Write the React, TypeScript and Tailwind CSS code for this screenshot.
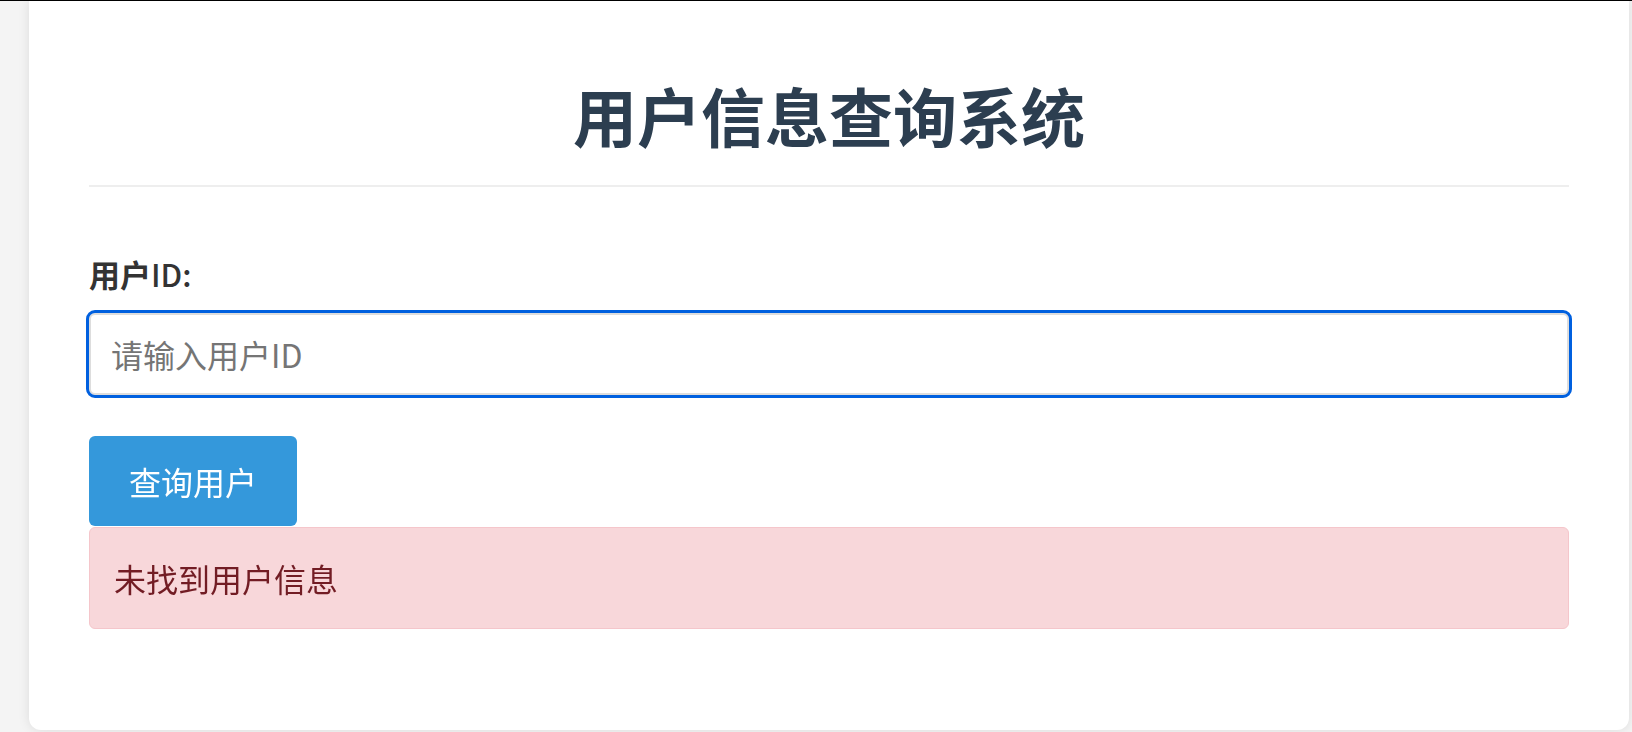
import React, { useEffect, useRef, useState } from "react";

export default function App() {
  const [userId, setUserId] = useState("");
  const inputRef = useRef<HTMLInputElement>(null);

  useEffect(() => {
    inputRef.current?.focus();
  }, []);

  return (
    <div
      className="min-h-[732px] bg-[#f4f4f4] border-t border-black"
      style={{ fontFamily: '"Noto Sans CJK SC", "Noto Sans", sans-serif' }}
    >
      <div className="ml-[29px] w-[1600px] bg-white rounded-b-xl shadow-[0_0_12px_rgba(0,0,0,0.1)] px-[60px] pt-[70px] pb-[101px]">
        <h1 className="text-center text-[64px] leading-[86px] font-bold text-[#2c3e50] pb-[28px] border-b-2 border-[#eee]">
          用户信息查询系统
        </h1>

        <label className="block mt-[69px] text-[31px] leading-[36px] font-bold text-[#333]">
          用户<span className="font-medium">ID:</span>
        </label>

        <input
          ref={inputRef}
          value={userId}
          onChange={(e) => setUserId(e.target.value)}
          placeholder="请输入用户ID"
          className="mt-[21px] block w-full h-[82px] px-[20px] text-[32px] text-[#333] placeholder:text-[#757575] border-2 border-[#ddd] rounded-md outline-[3px] outline-solid outline-[#0060df] focus:outline-[3px] focus:outline-solid focus:outline-[#0060df]"
        />

        <button className="mt-[41px] block w-[208px] h-[90px] bg-[#3498db] text-white text-[32px] rounded-md">
          查询用户
        </button>

        <div className="mt-[1px] h-[102px] flex items-center px-[24px] bg-[#f8d7da] border border-[#f5c6cb] rounded-md text-[#721c24] text-[32px]">
          未找到用户信息
        </div>
      </div>
    </div>
  );
}
